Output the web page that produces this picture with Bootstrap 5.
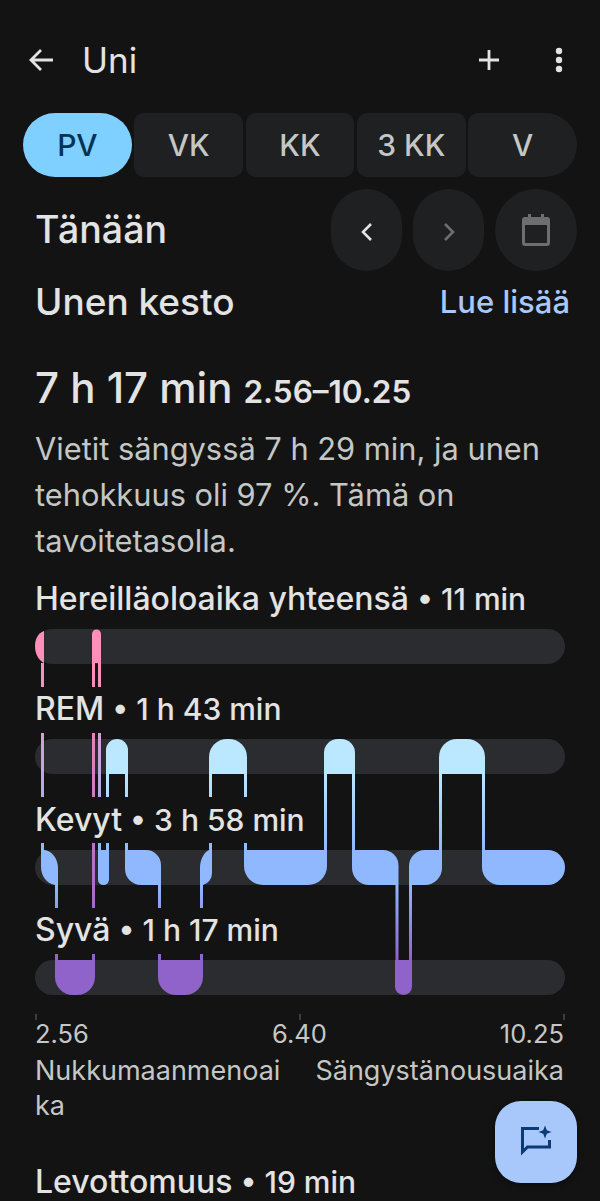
<!DOCTYPE html>
<html lang="fi">
<head>
  <meta charset="UTF-8">
  <meta name="viewport" content="width=device-width, initial-scale=1.0">
  <title>Uni</title>
  <link href="https://cdn.jsdelivr.net/npm/bootstrap@5.3.0/dist/css/bootstrap.min.css" rel="stylesheet">
  <style>
    html, body { height: 1201px; overflow: hidden; }
    body { background: #131313; color: #e3e3e3; font-family: Inter, Roboto, sans-serif; }
    .app-bar { height: 40px; margin-top: 40px; padding: 0 39px 0 28px; }
    .app-title { font-size: 35px; margin-left: 28px; line-height: 40px; }
    .range-tabs { margin: 33px 23px 0; gap: 2.5px; }
    .range-tab { flex: 1 1 0; height: 64px; border: 0; padding: 0; background: #1e2022; color: #c4c7c5; font-size: 30px; font-weight: 500; border-radius: 10px; }
    .range-tab.on { background: #7fcfff; color: #003355; border-radius: 32px; }
    .range-tab.end { border-radius: 10px 32px 32px 10px; }
    .date-row { height: 82px; margin: 12px 23px 0 35px; }
    .date-title { font-size: 37.5px; font-weight: 500; }
    .date-btn { width: 71px; height: 82px; border: 0; padding: 0; background: #1e2022; border-radius: 36px; }
    .date-btn.wide { width: 82px; border-radius: 50%; }
    .date-btns { gap: 11px; }
    .head-row { height: 44px; margin: 9px 30px 0 35px; }
    .head-title { font-size: 37px; font-weight: 500; }
    .more-link { font-size: 31px; font-weight: 500; color: #a8c7fa; text-decoration: none; }
    .dur-row { height: 50px; margin: 32px 35px 0; }
    .dur-big { font-size: 42px; font-weight: 500; }
    .dur-range { font-size: 31.5px; font-weight: 600; margin-left: 11px; }
    .dur-text { margin: 20px 35px 0; font-size: 30.8px; line-height: 46px; color: #c4c7c5; height: 138px; }
    .hypno-svg { position: absolute; left: 0; top: 0; }
    .stage-label { height: 40px; line-height: 40px; margin: 15px 35px 10px; font-size: 30px; font-weight: 500; white-space: nowrap; }
    .stage-name { font-size: 32px; }
    .stage-track { height: 35px; margin: 0 35px 10.33px; background: #2a2c2f; border-radius: 18px; flex: none; }
    .axis-ticks { margin: 9px 35px 0; height: 6px; flex: none; }
    .axis-tick { width: 2px; background: #3a3c3f; }
    .axis-times { margin: -3px 36px 0 35px; font-size: 25.5px; line-height: 34px; color: #c4c7c5; }
    .axis-cell { flex: 1 1 0; }
    .axis-ends { margin: 1.5px 36px 0 35px; font-size: 27px; line-height: 35px; color: #c4c7c5; }
    .end-left { width: 258px; word-break: break-all; }
    .next-title { margin: 39.5px 35px 0; font-size: 30px; font-weight: 500; line-height: 40px; white-space: nowrap; }
    .chat-fab { position: absolute; left: 495px; top: 1101px; width: 82px; height: 82px; border: 0; padding: 0; border-radius: 26px; background: #a8c7fa; box-shadow: 0 2px 6px rgba(0,0,0,.4); }
  </style>
</head>
<body>
  <div class="app-bar d-flex align-items-center">
    <svg width="26" height="26" viewBox="0 0 26 26" fill="none" stroke="#e3e3e3" stroke-width="2.8"><path d="M25 13H3M13 3L3 13l10 10"/></svg>
    <div class="app-title">Uni</div>
    <svg class="ms-auto" width="22" height="22" viewBox="0 0 22 22" stroke="#e3e3e3" stroke-width="2.8"><path d="M11 1v20M1 11h20"/></svg>
    <svg style="margin-left:54px;margin-right:-3px" width="10" height="26" viewBox="0 0 10 26" fill="#e3e3e3"><circle cx="5" cy="4" r="3.2"/><circle cx="5" cy="13" r="3.2"/><circle cx="5" cy="22" r="3.2"/></svg>
  </div>

  <div class="range-tabs d-flex">
    <button class="range-tab on">PV</button>
    <button class="range-tab">VK</button>
    <button class="range-tab">KK</button>
    <button class="range-tab">3 KK</button>
    <button class="range-tab end">V</button>
  </div>

  <div class="date-row d-flex align-items-center justify-content-between">
    <div class="date-title">Tänään</div>
    <div class="date-btns d-flex">
      <button class="date-btn"><svg width="14" height="20" viewBox="0 0 14 20" fill="none" stroke="#e3e3e3" stroke-width="2.6"><path d="M11 2L3 10l8 8"/></svg></button>
      <button class="date-btn"><svg width="14" height="20" viewBox="0 0 14 20" fill="none" stroke="#6c6e70" stroke-width="2.6"><path d="M3 2l8 8-8 8"/></svg></button>
      <button class="date-btn wide"><svg width="28" height="32" viewBox="0 0 28 32"><path fill="#6c6e70" d="M6 0h3v3h10V0h3v3h3a3 3 0 0 1 3 3v23a3 3 0 0 1-3 3H3a3 3 0 0 1-3-3V6a3 3 0 0 1 3-3h3zM3 11v18h22V11z"/></svg></button>
    </div>
  </div>

  <div class="head-row d-flex align-items-center justify-content-between">
    <div class="head-title">Unen kesto</div>
    <a class="more-link" href="#">Lue lisää</a>
  </div>

  <div class="dur-row d-flex align-items-baseline">
    <span class="dur-big">7 h 17 min</span><span class="dur-range">2.56–10.25</span>
  </div>
  <div class="dur-text">Vietit sängyssä 7 h 29 min, ja unen tehokkuus oli 97 %. Tämä on tavoitetasolla.</div>

  <div class="position-relative d-flex flex-column">
    <div class="stage-label"><span class="stage-name">Hereilläoloaika yhteensä</span> • 11 min</div>
    <div class="stage-track"></div>
    <div class="stage-label"><span class="stage-name">REM</span> • 1 h 43 min</div>
    <div class="stage-track"></div>
    <div class="stage-label"><span class="stage-name">Kevyt</span> • 3 h 58 min</div>
    <div class="stage-track"></div>
    <div class="stage-label"><span class="stage-name">Syvä</span> • 1 h 17 min</div>
    <div class="stage-track"></div>
    <div class="axis-ticks d-flex justify-content-between">
      <span class="axis-tick"></span><span class="axis-tick"></span><span class="axis-tick"></span>
    </div>
    <svg class="hypno-svg" width="600" height="460" viewBox="0 564 600 460">
      <defs>
        <linearGradient id="awakeLight" gradientUnits="userSpaceOnUse" x1="0" y1="663" x2="0" y2="850"><stop offset="0" stop-color="#ff8fb8"/><stop offset="1" stop-color="#8fb8ff"/></linearGradient>
        <linearGradient id="awakeDeep" gradientUnits="userSpaceOnUse" x1="0" y1="663" x2="0" y2="960"><stop offset="0" stop-color="#ff8fb8"/><stop offset="1" stop-color="#8f63c9"/></linearGradient>
        <linearGradient id="remLight" gradientUnits="userSpaceOnUse" x1="0" y1="774" x2="0" y2="850"><stop offset="0" stop-color="#bbe7ff"/><stop offset="1" stop-color="#8fb8ff"/></linearGradient>
        <linearGradient id="lightDeep" gradientUnits="userSpaceOnUse" x1="0" y1="885" x2="0" y2="960"><stop offset="0" stop-color="#8fb8ff"/><stop offset="1" stop-color="#8f63c9"/></linearGradient>
      </defs>
      <!-- hereillä -->
      <g fill="#ff8fb8">
        <path d="M44 631C38 633 35 639 35 646S38 660 44 663Z"/>
        <path d="M92 663V634a4.5 4.5 0 0 1 9 0V663Z"/>
      </g>
      <g fill="url(#awakeLight)">
        <rect x="41" y="663" width="3" height="24"/><rect x="98" y="663" width="3" height="24"/>
        <rect x="41" y="733" width="3" height="64"/><rect x="98" y="733" width="3" height="64"/>
        <rect x="41" y="843" width="3" height="7"/><rect x="98" y="843" width="3" height="7"/>
      </g>
      <g fill="url(#awakeDeep)">
        <rect x="92" y="663" width="3" height="24"/><rect x="92" y="733" width="3" height="64"/><rect x="92" y="843" width="3" height="65"/><rect x="92" y="954" width="3" height="6"/>
      </g>
      <!-- rem -->
      <g fill="#bbe7ff">
        <path d="M106 774V750a11 11 0 0 1 22 0V774Z"/>
        <path d="M209 774V757a18 18 0 0 1 18-18h2a18 18 0 0 1 18 18V774Z"/>
        <path d="M324 774V753a14 14 0 0 1 14-14h3a14 14 0 0 1 14 14V774Z"/>
        <path d="M439 774V757a18 18 0 0 1 18-18h10a18 18 0 0 1 18 18V774Z"/>
      </g>
      <g fill="url(#remLight)">
        <rect x="106" y="774" width="3" height="23"/><rect x="125" y="774" width="3" height="23"/>
        <rect x="209" y="774" width="3" height="23"/><rect x="244" y="774" width="3" height="23"/>
        <rect x="106" y="843" width="3" height="7"/><rect x="125" y="843" width="3" height="7"/>
        <rect x="209" y="843" width="3" height="7"/><rect x="244" y="843" width="3" height="7"/>
        <rect x="324" y="774" width="3" height="76"/><rect x="352" y="774" width="3" height="76"/>
        <rect x="439" y="774" width="3" height="76"/><rect x="482" y="774" width="3" height="76"/>
      </g>
      <!-- kevyt -->
      <g fill="#8fb8ff">
        <path d="M41 850H45C52 851 58 859 58 868V885H55C47 884 41 876 41 867Z"/>
        <path d="M98 850h11v29.5a5.5 5.5 0 0 1-11 0Z"/>
        <path d="M125 850H146A15 15 0 0 1 161 865V885H141A16 16 0 0 1 125 869Z"/>
        <path d="M212 850V873A12 12 0 0 1 203 885H200V868C200 860 204 852 209 850Z"/>
        <path d="M244 850H327V866A19 19 0 0 1 308 885H263A19 19 0 0 1 244 866Z"/>
        <path d="M352 850H383A15.5 15.5 0 0 1 398.5 865.5V885H369A17 17 0 0 1 352 868Z"/>
        <path d="M442 850V868A17 17 0 0 1 425 885H409V866A16 16 0 0 1 425 850Z"/>
        <path d="M482 850H547.5A17.5 17.5 0 0 1 547.5 885H500A18 18 0 0 1 482 867Z"/>
      </g>
      <g fill="url(#lightDeep)">
        <rect x="55" y="885" width="3" height="23"/><rect x="158" y="885" width="3" height="23"/><rect x="200" y="885" width="3" height="23"/>
        <rect x="55" y="954" width="3" height="6"/><rect x="158" y="954" width="3" height="6"/><rect x="200" y="954" width="3" height="6"/>
        <rect x="395.5" y="885" width="3" height="75"/><rect x="409" y="885" width="3" height="75"/>
      </g>
      <!-- syvä -->
      <g fill="#8f63c9">
        <path d="M55 960H95V977A18 18 0 0 1 77 995H73A18 18 0 0 1 55 977Z"/>
        <path d="M158 960H203V977A18 18 0 0 1 185 995H176A18 18 0 0 1 158 977Z"/>
        <path d="M395 960H412V986.5A8.5 8.5 0 0 1 395 986.5Z"/>
      </g>
    </svg>
    <div class="axis-times d-flex">
      <span class="axis-cell">2.56</span><span class="axis-cell text-center">6.40</span><span class="axis-cell text-end">10.25</span>
    </div>
    <div class="axis-ends d-flex justify-content-between">
      <span class="end-left">Nukkumaanmenoaika</span><span>Sängystänousuaika</span>
    </div>
    <div class="next-title"><span class="stage-name">Levottomuus</span> • 19 min</div>
  </div>

  <button class="chat-fab">
    <svg class="d-block" width="82" height="82" viewBox="0 0 82 82" fill="none"><path stroke="#0b3a75" stroke-width="3" d="M44 27.5H27.5V51l5-5h22V39"/><path fill="#0b3a75" d="M50 24.5l1.8 4.7 4.7 1.8-4.7 1.8-1.8 4.7-1.8-4.7-4.7-1.8 4.7-1.8z"/></svg>
  </button>
  <script src="https://cdn.jsdelivr.net/npm/bootstrap@5.3.0/dist/js/bootstrap.bundle.min.js"></script>
</body>
</html>
